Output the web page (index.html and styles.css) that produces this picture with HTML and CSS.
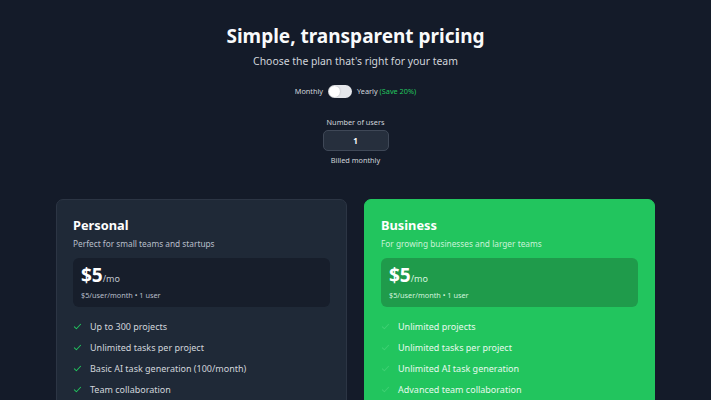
FILE: index.html
```html
<!DOCTYPE html>
<html>
<head>
<meta charset="utf-8">
<link rel="stylesheet" href="styles.css">
</head>
<body>
<main class="page">
  <header class="hero">
    <h1 class="title">Simple, transparent pricing</h1>
    <p class="subtitle">Choose the plan that's right for your team</p>
  </header>
  <div class="billing">
    <span class="billing-label">Monthly</span>
    <span class="toggle"><span class="knob"></span></span>
    <span class="billing-label">Yearly <span class="save">(Save 20%)</span></span>
  </div>
  <div class="users">
    <label class="users-label">Number of users</label>
    <div class="users-input">1</div>
    <div class="users-note">Billed monthly</div>
  </div>
  <section class="plans">
    <article class="plan">
      <h2 class="plan-name">Personal</h2>
      <p class="plan-desc">Perfect for small teams and startups</p>
      <div class="price-box">
        <div class="price"><span class="amount">$5</span><span class="per">/mo</span></div>
        <div class="price-note">$5/user/month • 1 user</div>
      </div>
      <ul class="features">
        <li><svg class="check" viewBox="0 0 16 16"><path d="M2.5 8.5l3.5 3.5 7.5-8"/></svg>Up to 300 projects</li>
        <li><svg class="check" viewBox="0 0 16 16"><path d="M2.5 8.5l3.5 3.5 7.5-8"/></svg>Unlimited tasks per project</li>
        <li><svg class="check" viewBox="0 0 16 16"><path d="M2.5 8.5l3.5 3.5 7.5-8"/></svg>Basic AI task generation (100/month)</li>
        <li><svg class="check" viewBox="0 0 16 16"><path d="M2.5 8.5l3.5 3.5 7.5-8"/></svg>Team collaboration</li>
      </ul>
    </article>
    <article class="plan plan-featured">
      <h2 class="plan-name">Business</h2>
      <p class="plan-desc">For growing businesses and larger teams</p>
      <div class="price-box">
        <div class="price"><span class="amount">$5</span><span class="per">/mo</span></div>
        <div class="price-note">$5/user/month • 1 user</div>
      </div>
      <ul class="features">
        <li><svg class="check" viewBox="0 0 16 16"><path d="M2.5 8.5l3.5 3.5 7.5-8"/></svg>Unlimited projects</li>
        <li><svg class="check" viewBox="0 0 16 16"><path d="M2.5 8.5l3.5 3.5 7.5-8"/></svg>Unlimited tasks per project</li>
        <li><svg class="check" viewBox="0 0 16 16"><path d="M2.5 8.5l3.5 3.5 7.5-8"/></svg>Unlimited AI task generation</li>
        <li><svg class="check" viewBox="0 0 16 16"><path d="M2.5 8.5l3.5 3.5 7.5-8"/></svg>Advanced team collaboration</li>
      </ul>
    </article>
  </section>
</main>
</body>
</html>
```

FILE: styles.css
```css
* { box-sizing: border-box; }
html, body {
  margin: 0;
  background: #141b29;
  color: #ffffff;
  font-family: "Noto Sans", "Open Sans", sans-serif;
}
.page {
  width: 599px;
  margin: 0 auto;
  padding-top: 22px;
}
.hero { text-align: center; }
.title {
  margin: 0;
  font-size: 19px;
  font-weight: 700;
  line-height: 28px;
  color: #f9fafb;
}
.subtitle {
  margin: 4px 0 0;
  font-size: 10.4px;
  line-height: 15px;
  color: #d1d5db;
}
.billing {
  margin-top: 15px;
  display: flex;
  justify-content: center;
  align-items: center;
  gap: 5px;
  font-size: 7.3px;
  line-height: 14px;
  color: #d1d5db;
}
.toggle {
  width: 24px;
  height: 13px;
  border-radius: 7px;
  background: #e5e7eb;
  display: flex;
  align-items: center;
  padding: 1px;
}
.knob {
  width: 11px;
  height: 11px;
  border-radius: 50%;
  background: #ffffff;
  box-shadow: 0 0 2px rgba(0,0,0,0.25);
}
.save { color: #22c55e; }
.users {
  margin-top: 18px;
  display: flex;
  flex-direction: column;
  align-items: center;
  font-size: 7.3px;
  color: #d1d5db;
}
.users-label { line-height: 12px; }
.users-input {
  margin-top: 2px;
  width: 66px;
  height: 21px;
  border: 1px solid #3f4857;
  background: #262f3d;
  border-radius: 5px;
  display: flex;
  align-items: center;
  justify-content: center;
  font-size: 8px;
  font-weight: 700;
  color: #ffffff;
}
.users-note { margin-top: 3px; line-height: 12px; }
.plans {
  margin-top: 33px;
  display: grid;
  grid-template-columns: 1fr 1fr;
  gap: 17px;
}
.plan {
  background: #1f2937;
  border: 1px solid #2c3544;
  border-radius: 7px;
  padding: 15px 16px 20px;
  min-height: 240px;
}
.plan-featured {
  background: #22c55e;
  border-color: #22c55e;
}
.plan-name {
  margin: 0;
  font-size: 12.8px;
  font-weight: 700;
  line-height: 20px;
  color: #ffffff;
}
.plan-desc {
  margin: 3px 0 0;
  font-size: 8.3px;
  line-height: 12px;
  color: #b7bec9;
}
.plan-featured .plan-desc { color: #c9f2d8; }
.price-box {
  margin-top: 8px;
  background: #171e2b;
  border-radius: 6px;
  padding: 6px 8px;
  height: 49px;
}
.plan-featured .price-box { background: #1f9b4b; }
.price {
  display: flex;
  align-items: baseline;
  line-height: 22px;
}
.amount {
  font-size: 19px;
  font-weight: 700;
  color: #ffffff;
}
.per {
  font-size: 9px;
  color: #c1c7d0;
}
.plan-featured .per { color: #d3f5df; }
.price-note {
  margin-top: 0;
  font-size: 7.3px;
  line-height: 10px;
  color: #b7bec9;
}
.plan-featured .price-note { color: #d3f5df; }
.features {
  list-style: none;
  margin: 9px 0 0;
  padding: 0;
}
.features li {
  display: flex;
  align-items: center;
  height: 21px;
  font-size: 9px;
  color: #d1d5db;
}
.plan-featured .features li { color: #e6f9ed; }
.check {
  width: 9px;
  height: 9px;
  margin-right: 8px;
  fill: none;
  stroke: #22c55e;
  stroke-width: 1.8;
  stroke-linecap: round;
  stroke-linejoin: round;
}
.plan-featured .check { stroke: #3fd073; }
```
